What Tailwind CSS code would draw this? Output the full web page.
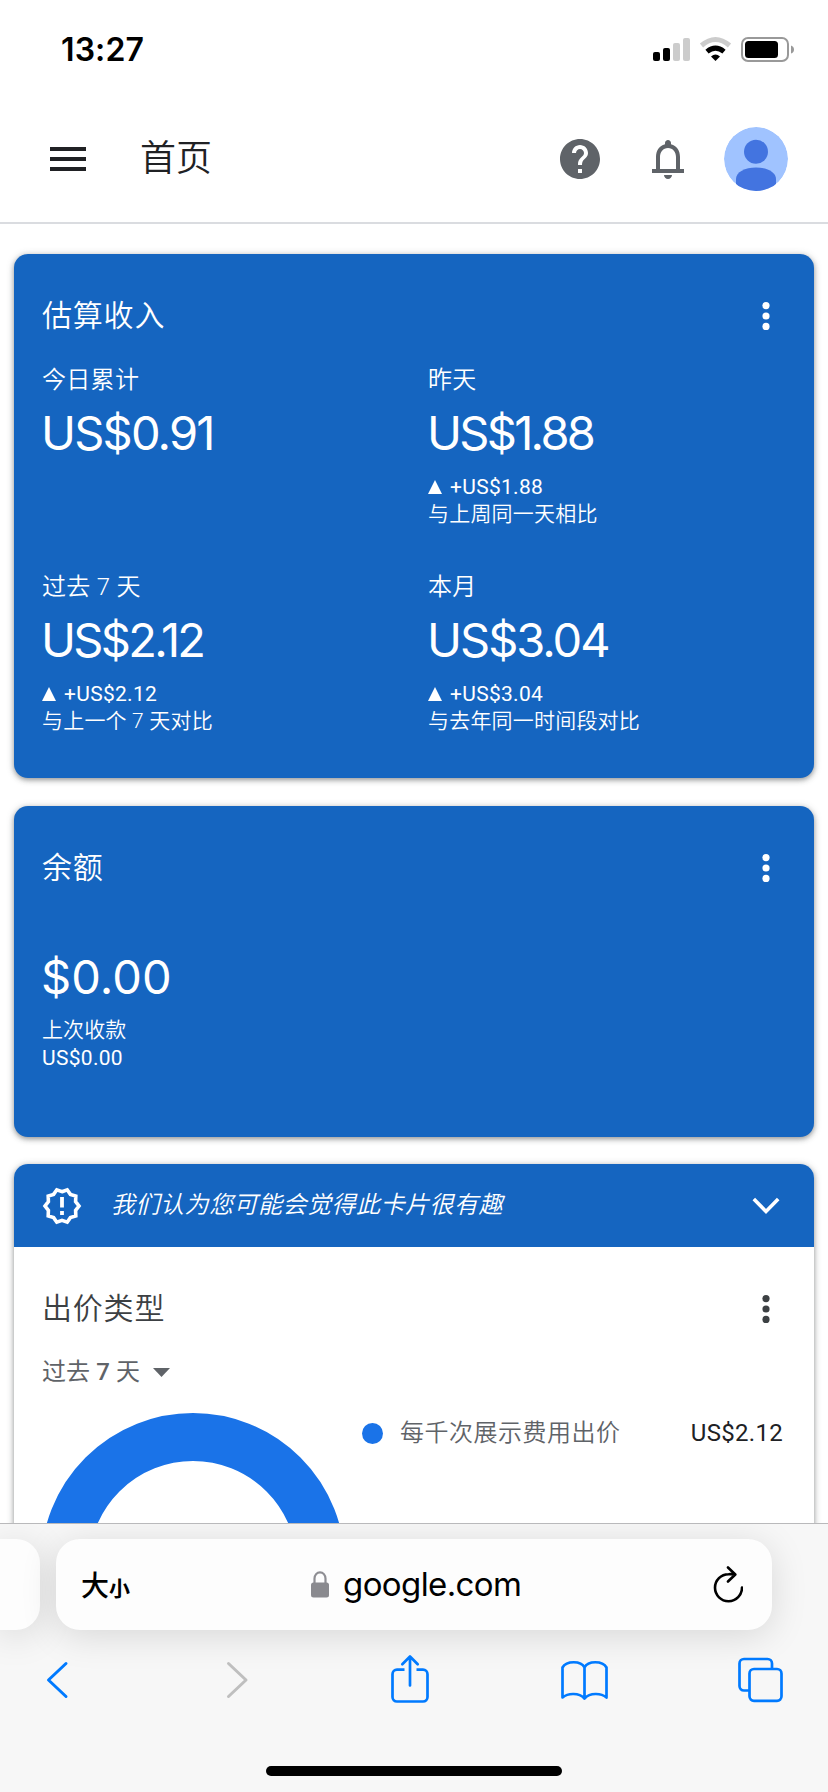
<!DOCTYPE html>
<html lang="zh-CN">
<head>
<meta charset="utf-8">
<title>首页</title>
<script src="https://cdn.jsdelivr.net/npm/@tailwindcss/browser@4"></script>
</head>
<body class="w-[828px] h-[1792px] overflow-hidden flex flex-col bg-white font-['Roboto','Noto_Sans_CJK_SC',sans-serif] whitespace-nowrap">

<!-- Status bar -->
<div class="h-[95px] shrink-0 flex justify-between">
  <div class="pl-[61px] pt-[30px] text-[32px] leading-[40px] font-semibold text-black font-['Inter',sans-serif] tracking-[0.1px]">13:27</div>
  <svg class="mr-[28px] mt-[30px]" width="150" height="40" viewBox="650 30 150 40">
    <rect x="653" y="52" width="7" height="9" rx="2"/>
    <rect x="663" y="48" width="7" height="13" rx="2"/>
    <rect x="673" y="43" width="7" height="18" rx="2" fill="#ccc"/>
    <rect x="683" y="38" width="7" height="23" rx="2" fill="#ccc"/>
    <path d="M701.5 45.5Q715.5 33.5 729.500 45.500" fill="none" stroke="#ccc" stroke-width="5"/>
    <path d="M707 51.600Q715.500 44.600 724 51.600" fill="none" stroke="#000" stroke-width="5"/>
    <path d="M715.5 61l-4.500-4.500Q715.500 52.500 720 56.500z"/>
    <rect x="742" y="38" width="46" height="23" rx="6" fill="none" stroke="#999" stroke-width="2"/>
    <rect x="745" y="41" width="33" height="17" rx="3.500"/>
    <path d="M791 45.500q3 1 3 4t-3 4z" fill="#999"/>
  </svg>
</div>

<!-- App header -->
<header class="h-[129px] shrink-0 flex items-center border-b-2 border-[#dadce0] pl-[50px] pr-[40px]">
  <svg width="36" height="24" viewBox="0 0 36 24" fill="#202124"><path d="M0 0h36v4H0zM0 10h36v4H0zM0 20h36v4H0z"/></svg>
  <h1 class="ml-[54px] mt-px text-[36px] leading-[48px] text-[#202124] font-[350]">首页</h1>
  <svg class="ml-auto" width="48" height="48" viewBox="0 0 24 24" fill="#5f6368"><path d="M12 2C6.480 2 2 6.480 2 12s4.480 10 10 10 10-4.480 10-10S17.520 2 12 2zm1 17h-2v-2h2v2zm2.070-7.750l-.900.920C13.450 12.900 13 13.500 13 15h-2v-.500c0-1.100.450-2.100 1.170-2.830l1.240-1.260c.370-.360.590-.860.590-1.410 0-1.100-.900-2-2-2s-2 .900-2 2H8c0-2.210 1.790-4 4-4s4 1.790 4 4c0 .880-.360 1.680-.930 2.250z"/></svg>
  <svg class="ml-[40px]" width="48" height="48" viewBox="0 0 24 24" fill="#5f6368"><path d="M18 17v-6c0-3.070-1.630-5.640-4.500-6.320V4c0-.830-.670-1.500-1.500-1.500s-1.500.670-1.500 1.500v.680C7.640 5.360 6 7.920 6 11v6H4v2h16v-2h-2zm-2 0H8v-6c0-2.480 1.510-4.500 4-4.500s4 2.020 4 4.500v6zM12 22c1.100 0 2-.900 2-2h-4c0 1.100.900 2 2 2z"/></svg>
  <svg class="ml-[32px] rounded-full" width="64" height="64" viewBox="0 0 64 64"><circle cx="32" cy="32" r="32" fill="#a0c3ff"/><circle cx="32" cy="24.800" r="12" fill="#4374e0"/><path d="M12 64V52C12 45 21 40.500 32 40.500S52 45 52 52V64z" fill="#4374e0"/></svg>
</header>

<!-- Cards -->
<main class="h-[1299px] shrink-0 overflow-hidden px-[14px] pt-[30px] flex flex-col gap-[28px]">

  <section class="h-[524px] shrink-0 rounded-[14px] bg-[#1565c0] text-white shadow-[0_2px_5px_rgba(60,64,67,0.45),0_1px_8px_rgba(60,64,67,0.2)] px-[28px] pt-[30px]">
    <div class="h-[64px] flex items-center justify-between">
      <h2 class="text-[30px] tracking-[0.8px] leading-[64px] font-[350]">估算收入</h2>
      <svg class="mr-[14px]" width="12" height="32" viewBox="0 0 12 32" fill="#fff"><circle cx="6" cy="5.600" r="3.600"/><circle cx="6" cy="16" r="3.600"/><circle cx="6" cy="26.400" r="3.600"/></svg>
    </div>
    <div class="mt-[14px] grid grid-cols-[386px_1fr] gap-y-[40px]">
      <div class="h-[167px]">
        <div class="text-[24px] leading-[36px] tracking-[0.3px] font-[350]">今日累计</div>
        <div class="-ml-px mt-[7px] text-[47px] leading-[56px] font-['Inter',sans-serif] font-[370] tracking-[-1.800px]">US$0.91</div>
      </div>
      <div class="h-[167px]">
        <div class="text-[24px] leading-[36px] tracking-[0.3px] font-[350]">昨天</div>
        <div class="-ml-px mt-[7px] text-[47px] leading-[56px] font-['Inter',sans-serif] font-[370] tracking-[-2.700px]">US$1.88</div>
        <div class="mt-[12px] text-[21px] leading-[28px] tracking-[0.300px] flex items-center"><svg class="mr-[8px]" width="14" height="14" viewBox="0 0 14 14" fill="#fff"><path d="M7 0l7 14H0z"/></svg>+US$1.88</div>
        <div class="-mt-px text-[21px] leading-[28px] tracking-[0.200px] font-[350]">与上周同一天相比</div>
      </div>
      <div class="h-[167px]">
        <div class="text-[24px] leading-[36px] tracking-[0.3px] font-[350]">过去 7 天</div>
        <div class="-ml-px mt-[7px] text-[47px] leading-[56px] font-['Inter',sans-serif] font-[370] tracking-[-2.700px]">US$2.12</div>
        <div class="mt-[12px] text-[21px] leading-[28px] tracking-[0.300px] flex items-center"><svg class="mr-[8px]" width="14" height="14" viewBox="0 0 14 14" fill="#fff"><path d="M7 0l7 14H0z"/></svg>+US$2.12</div>
        <div class="-mt-px text-[21px] leading-[28px] tracking-[0.200px] font-[350]">与上一个 7 天对比</div>
      </div>
      <div class="h-[167px]">
        <div class="text-[24px] leading-[36px] tracking-[0.3px] font-[350]">本月</div>
        <div class="-ml-px mt-[7px] text-[47px] leading-[56px] font-['Inter',sans-serif] font-[370] tracking-[-2px]">US$3.04</div>
        <div class="mt-[12px] text-[21px] leading-[28px] tracking-[0.300px] flex items-center"><svg class="mr-[8px]" width="14" height="14" viewBox="0 0 14 14" fill="#fff"><path d="M7 0l7 14H0z"/></svg>+US$3.04</div>
        <div class="-mt-px text-[21px] leading-[28px] tracking-[0.200px] font-[350]">与去年同一时间段对比</div>
      </div>
    </div>
  </section>

  <section class="h-[331px] shrink-0 rounded-[14px] bg-[#1565c0] text-white shadow-[0_2px_5px_rgba(60,64,67,0.45),0_1px_8px_rgba(60,64,67,0.2)] px-[28px] pt-[30px]">
    <div class="h-[64px] flex items-center justify-between">
      <h2 class="text-[30px] tracking-[0.8px] leading-[64px] font-[350]">余额</h2>
      <svg class="mr-[14px]" width="12" height="32" viewBox="0 0 12 32" fill="#fff"><circle cx="6" cy="5.600" r="3.600"/><circle cx="6" cy="16" r="3.600"/><circle cx="6" cy="26.400" r="3.600"/></svg>
    </div>
    <div class="-ml-px mt-[49px] text-[47px] leading-[56px] font-['Inter',sans-serif] font-[370] tracking-[0.100px]">$0.00</div>
    <div class="mt-[11px] text-[21px] leading-[28px] tracking-[0.100px] font-[350]">上次收款</div>
    <div class="text-[21px] leading-[28px] tracking-[0.300px]">US$0.00</div>
  </section>

  <section class="h-[560px] shrink-0 rounded-[14px] overflow-hidden bg-white shadow-[0_2px_5px_rgba(60,64,67,0.45),0_1px_8px_rgba(60,64,67,0.2)] -mt-px">
    <div class="h-[83px] bg-[#1565c0] text-white flex items-center px-[28px]">
      <svg width="40" height="40" viewBox="0 0 40 40" fill="none" stroke="#fff" stroke-width="3.600"><path d="M20.0 5.7L25.200 3.800L28.400 8.400L33.800 10.000L33.600 15.600L37.000 20.000L33.600 24.400L33.800 30.000L28.400 31.600L25.200 36.200L20.0 34.300L14.800 36.200L11.600 31.600L6.200 30.000L6.400 24.400L3.000 20.000L6.400 15.600L6.200 10.000L11.600 8.400L14.800 3.800Z"/><path d="M20 11v10.500M20 25v4" stroke-width="3.800"/></svg>
      <div class="ml-[29px] -mt-[2px] text-[24px] leading-[36px] tracking-[0.500px] italic font-[350]">我们认为您可能会觉得此卡片很有趣</div>
      <svg class="ml-auto mr-[6px]" width="28" height="18" viewBox="0 0 28 18" fill="none" stroke="#fff" stroke-width="3.600"><path d="M1.800 2l12.200 12.500L26.200 2"/></svg>
    </div>
    <div class="px-[28px] pt-[30px]">
      <div class="h-[64px] flex items-center justify-between text-[#3c4043]">
        <h2 class="text-[30px] tracking-[0.8px] leading-[64px] font-[350]">出价类型</h2>
        <svg class="mr-[14px]" width="12" height="32" viewBox="0 0 12 32" fill="#3c4043"><circle cx="6" cy="5.600" r="3.600"/><circle cx="6" cy="16" r="3.600"/><circle cx="6" cy="26.400" r="3.600"/></svg>
      </div>
      <div class="mt-[13px] h-[36px] flex items-center text-[24px] leading-[36px] text-[#5f6368]"><span class="tracking-[0.1px]">过去 <span class="font-medium">7</span> 天</span><svg class="ml-[13px]" width="17" height="9" viewBox="0 0 17 9" fill="#5f6368"><path d="M0 0h17l-8.500 9z"/></svg></div>
      <div class="mt-[23px] flex items-start">
        <svg class="-ml-px" width="304" height="304" viewBox="0 0 304 304"><circle cx="152" cy="152" r="128" fill="none" stroke="#1a73e8" stroke-width="48"/></svg>
        <div class="ml-[17px] mt-[2px] h-[36px] flex flex-1 items-center text-[24px] leading-[36px]">
          <span class="mt-px size-[21px] rounded-full bg-[#1a73e8]"></span>
          <span class="ml-[17px] text-[#5f6368] tracking-[0.500px] font-[350]">每千次展示费用出价</span>
          <span class="ml-auto mr-[3px] text-[#202124] tracking-[0.300px]">US$2.12</span>
        </div>
      </div>
    </div>
  </section>
</main>

<!-- Browser toolbar -->
<footer class="h-[269px] shrink-0 overflow-hidden bg-[#f7f7f7] border-t border-[#b9b9bb] flex flex-col">
  <div class="mt-[15px] h-[91px] shrink-0 flex">
    <div class="w-[40px] rounded-r-[24px] bg-[#fdfdfd] shadow-[0_6px_36px_rgba(0,0,0,0.13)]"></div>
    <div class="ml-[16px] w-[716px] rounded-[24px] bg-[#fdfdfd] shadow-[0_6px_36px_rgba(0,0,0,0.13)] flex items-center text-black">
      <div class="ml-[25px] mt-px w-[60px] flex items-baseline font-['Noto_Sans_CJK_SC',sans-serif]"><span class="text-[28px] leading-[40px] font-medium">大</span><span class="text-[21px] leading-[40px] font-bold">小</span></div>
      <svg class="ml-[170px]" width="18" height="27" viewBox="0 0 18 27"><path d="M3.500 13V7.500a5.500 6.200 0 0 1 11 0V13" fill="none" stroke="#8e8e93" stroke-width="2.200"/><rect y="11.500" width="18" height="15" rx="2.500" fill="#8a8a8f"/></svg>
      <div class="ml-[14px] -mt-[2px] text-[33px] leading-[40px] tracking-[-0.600px] font-['Inter',sans-serif]">google.com</div>
      <svg class="ml-auto mr-[29px]" width="30" height="40" viewBox="712 1564 30 40" fill="none" stroke="#000" stroke-width="2.600" stroke-linecap="round" stroke-linejoin="round"><path d="M741 1586.500A13.500 13.500 0 1 1 727.500 1573.200Q731 1573 734 1573.500M727 1566.500l7.300 7-7.300 7"/></svg>
    </div>
  </div>
  <div class="mt-[20px] h-[60px] shrink-0 flex pl-[28px]">
    <svg width="60" height="60" viewBox="28 1650 60 60" fill="none" stroke="#007aff" stroke-width="3" stroke-linecap="round" stroke-linejoin="round"><path d="M66 1663.500L48.500 1680 66 1696.500"/></svg>
    <svg class="ml-[120px]" width="60" height="60" viewBox="208 1650 60 60" fill="none" stroke="#bfbfbf" stroke-width="3" stroke-linecap="round" stroke-linejoin="round"><path d="M228.500 1663.500L246 1680 228.500 1696.500"/></svg>
    <svg class="ml-[112px]" width="60" height="60" viewBox="380 1650 60 60" fill="none" stroke="#007aff" stroke-width="2.700" stroke-linecap="round" stroke-linejoin="round"><path d="M404.500 1669.700H397a4.500 4.500 0 0 0-4.500 4.500v22.800a4.500 4.500 0 0 0 4.500 4.500h26a4.500 4.500 0 0 0 4.500-4.500v-22.800a4.500 4.500 0 0 0-4.500-4.500h-6.500" stroke-linecap="butt"/><path d="M410 1685.500V1656.500M402.300 1664.300l7.700-7.800 7.700 7.800"/></svg>
    <svg class="ml-[115px]" width="60" height="60" viewBox="555 1650 60 60" fill="none" stroke="#007aff" stroke-width="2.700" stroke-linecap="round" stroke-linejoin="round"><path d="M584.500 1667.500C581 1660.500 566.500 1660.500 562.500 1667.500V1697.500C568 1692.800 579 1692.500 584.500 1698.500C590 1692.500 601 1692.800 606.500 1697.500V1667.500C602.500 1660.500 588 1660.500 584.500 1667.500V1698"/></svg>
    <svg class="ml-[116px]" width="60" height="60" viewBox="731 1650 60 60" fill="none" stroke="#007aff" stroke-width="2.700" stroke-linejoin="round"><rect x="749.500" y="1669" width="32" height="31.800" rx="4.500"/><path d="M749 1690.500H744a4.500 4.500 0 0 1-4.500-4.500v-22.500a4.500 4.500 0 0 1 4.500-4.500h23.500a4.500 4.500 0 0 1 4.500 4.500V1669"/></svg>
  </div>
  <div class="mt-[56px] mx-auto w-[296px] h-[10px] rounded-full bg-black"></div>
</footer>
</body>
</html>
